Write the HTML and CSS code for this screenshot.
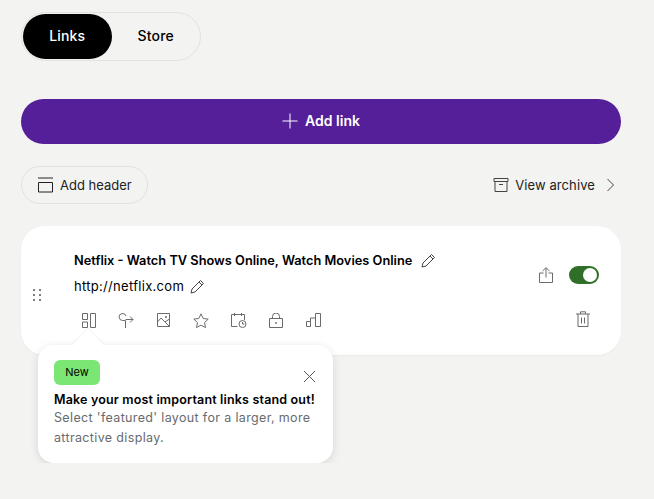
FILE: index.html
```html
<!DOCTYPE html>
<html lang="en">
<head>
  <meta charset="UTF-8" />
  <title>Links</title>
  <link rel="stylesheet" href="styles.css">
</head>
<body>
  <div class="tabs">
    <div class="tab active">Links</div>
    <div class="tab">Store</div>
  </div>

  <button class="add-link">
    <svg width="16" height="16" viewBox="0 0 16 16" fill="none" stroke="#fff"><path d="M8 0.500v15M0.500 8h15"/></svg>
    Add link
  </button>

  <div class="tools">
    <button class="add-header">
      <svg width="16" height="16" viewBox="0 0 16 16" fill="none" stroke="#222"><path d="M1 1h15M1.500 5.500h14v9.500h-14z"/></svg>
      Add header
    </button>
    <div class="archive">
      <svg width="16" height="16" viewBox="0 0 16 16" fill="none" stroke="#444"><path d="M1 1.500h14v3h-14zM2 4.500v10h12v-10M6 7.500h4"/></svg>
      View archive
      <svg class="chevron" width="9" height="14" viewBox="0 0 9 14" fill="none" stroke="#444"><path d="M1.500 1l6 6-6 6"/></svg>
    </div>
  </div>

  <div class="card">
    <div class="handle">
      <svg width="8" height="12" viewBox="0 0 8 12" fill="#555"><circle cx="1" cy="1" r="1"/><circle cx="7" cy="1" r="1"/><circle cx="1" cy="6" r="1"/><circle cx="7" cy="6" r="1"/><circle cx="1" cy="11" r="1"/><circle cx="7" cy="11" r="1"/></svg>
    </div>
    <div class="card-main">
      <div class="title-row">
        Netflix - Watch TV Shows Online, Watch Movies Online
        <svg width="15" height="15" viewBox="0 0 15 15" fill="none" stroke="#444"><path d="M1 14l1-4L10.500 1.500l3 3L5 13zM9 3l3 3"/></svg>
      </div>
      <div class="url-row">
        http://netflix.com
        <svg width="15" height="15" viewBox="0 0 15 15" fill="none" stroke="#444"><path d="M1 14l1-4L10.500 1.500l3 3L5 13zM9 3l3 3"/></svg>
      </div>
      <div class="icon-row">
        <svg width="14" height="15" viewBox="0 0 14 15"><path d="M.5.500h5v6h-5zM.5 9h5v5.500h-5zM8.500.500h5v14h-5z"/></svg>
        <svg width="16" height="16" viewBox="0 0 16 16"><path d="M7.500 16V8.500H4.500a3.500 3.500 0 1 1 3.500-4.500M7.500 7.500h7.500M12 4.500l3 3-3 3"/></svg>
        <svg width="15" height="14" viewBox="0 0 15 14"><path d="M1.500.500h12v13h-12zM1.500 9l3.500-4 8.500 8.500M9 9l4.500-3"/><circle cx="10" cy="4" r=".7"/></svg>
        <svg width="16" height="15" viewBox="0 0 16 15"><path d="M8 .8l2.200 4.700 5 .6-3.700 3.500 1 5L8 12.100l-4.500 2.500 1-5L.8 6.100l5-.6z"/></svg>
        <svg width="16" height="15" viewBox="0 0 16 15"><path d="M6.500 13.500H.5V1.500h13V7M3.500 0v3M10.500 0v3"/><circle cx="11.500" cy="11" r="3.500"/><path d="M11.500 9v2h2"/></svg>
        <svg width="14" height="15" viewBox="0 0 14 15"><path d="M.5 5.500h13v9h-13zM3.500 5.500V3.500a3.500 3.500 0 0 1 7 0v2"/><circle cx="7" cy="10" r=".6"/></svg>
        <svg width="16" height="14" viewBox="0 0 16 14"><path d="M1.500 8.500h4v5h-4zM5.500 13.500V5h5v8.500M10.500 13.500V.500h5v13z"/></svg>
      </div>
    </div>
    <div class="card-side">
      <div class="side-top">
        <svg class="share" width="14" height="16" viewBox="0 0 14 16"><path d="M4.500 6H.5v9.500h13V6h-4M7 10.500V1M3.500 4L7 .7 10.500 4"/></svg>
        <div class="toggle"><span class="knob"></span></div>
      </div>
      <svg class="trash" width="14" height="16" viewBox="0 0 14 16"><path d="M0 3h14M4.500 3V.8h5V3M2 3v12.500h10V3M5.500 6.500v6M8.500 6.500v6"/></svg>
    </div>
  </div>

  <div class="popover">
    <span class="popover-arrow"></span>
    <div class="popover-head">
      <span class="badge">New</span>
      <svg class="close" width="13" height="13" viewBox="0 0 13 13" fill="none" stroke="#555"><path d="M1 1l11 11M12 1L1 12"/></svg>
    </div>
    <div class="popover-title">Make your most important links stand out!</div>
    <div class="popover-text">Select 'featured' layout for a larger, more attractive display.</div>
  </div>
</body>
</html>
```

FILE: styles.css
```css
body {
  margin: 0;
  padding: 12px 33px 0 21px;
  background: #f3f3f1;
  font-family: 'Inter', 'Liberation Sans', sans-serif;
  color: #000;
}

button {
  font-family: inherit;
  cursor: pointer;
}

.tabs {
  display: flex;
  width: 180px;
  height: 49px;
  padding: 1px 0 0 1px;
  border: 1px solid #e2e2dc;
  border-radius: 25px;
  box-sizing: border-box;
}

.tab {
  width: 89px;
  height: 45px;
  border-radius: 23px;
  font-size: 14px;
  font-weight: 500;
  letter-spacing: 0.2px;
  line-height: 44px;
  text-align: center;
}

.tab.active {
  background: #000;
  color: #fff;
}

.add-link {
  display: flex;
  align-items: center;
  justify-content: center;
  gap: 7px;
  width: 600px;
  height: 45px;
  margin-top: 38px;
  padding: 0 0 2px;
  border: none;
  border-radius: 23px;
  background: #551f99;
  color: #fff;
  font-size: 14px;
  font-weight: 600;
}

.tools {
  display: flex;
  align-items: center;
  justify-content: space-between;
  margin-top: 22px;
}

.add-header {
  display: flex;
  align-items: center;
  gap: 7px;
  width: 127px;
  height: 38px;
  padding: 0 0 1px 15px;
  border: 1px solid #e2e2dc;
  border-radius: 19px;
  background: none;
  color: #222;
  font-size: 13px;
}

.archive {
  display: flex;
  align-items: center;
  gap: 6px;
  padding-bottom: 1px;
  color: #222;
  font-size: 13px;
  letter-spacing: 0.1px;
}

.chevron {
  margin-left: 5px;
  margin-right: 6px;
}

.card {
  display: flex;
  height: 129px;
  margin-top: 22px;
  border-radius: 24px;
  background: #fff;
  box-shadow: 0 1px 2px rgba(0, 0, 0, 0.04);
}

.icon-row svg,
.share,
.trash {
  fill: none;
  stroke: #6b6b6b;
}

.handle {
  width: 53px;
  padding: 59px 0 0 12px;
  box-sizing: border-box;
}

.card-main {
  flex: 1;
  padding-top: 24px;
}

.title-row {
  display: flex;
  align-items: center;
  gap: 9px;
  height: 20px;
  font-size: 12.800px;
  font-weight: 600;
}

.url-row {
  display: flex;
  align-items: center;
  gap: 6px;
  height: 20px;
  margin-top: 6px;
  font-size: 13px;
  letter-spacing: 0.3px;
}

.icon-row {
  display: flex;
  align-items: center;
  gap: 22px;
  height: 16px;
  margin-top: 16px;
  margin-left: 8px;
}

.card-side {
  display: flex;
  flex-direction: column;
  align-items: flex-end;
  padding: 40px 22px 0 0;
}

.side-top {
  display: flex;
  align-items: center;
  gap: 16px;
}

.toggle {
  display: flex;
  justify-content: flex-end;
  width: 30px;
  height: 18px;
  padding: 2px;
  box-sizing: border-box;
  border-radius: 9px;
  background: #2f6f27;
}

.knob {
  width: 14px;
  height: 14px;
  border-radius: 50%;
  background: #fff;
}

.trash {
  margin-top: 27px;
  margin-right: 9px;
}

.popover {
  position: relative;
  width: 295px;
  height: 118px;
  margin: -10px 0 0 17px;
  padding: 15px 16px;
  box-sizing: border-box;
  border-radius: 16px;
  background: #fff;
  box-shadow: 0 2px 10px rgba(0, 0, 0, 0.12);
}

.popover-arrow {
  position: absolute;
  left: 39px;
  top: -11px;
  width: 22px;
  height: 22px;
  background: #fff;
  box-shadow: -1px -1px 2px rgba(0, 0, 0, 0.05);
  transform: rotate(45deg);
}

.popover-head {
  position: relative;
  display: flex;
  justify-content: space-between;
  height: 25px;
}

.badge {
  width: 46px;
  height: 25px;
  border-radius: 6px;
  background: #7be673;
  font-size: 11px;
  line-height: 24px;
  text-align: center;
}

.close {
  margin-top: 10px;
  margin-right: 1px;
}

.popover-title {
  margin-top: 6px;
  font-size: 12.500px;
  font-weight: 600;
  letter-spacing: 0.17px;
  line-height: 17px;
  white-space: nowrap;
}

.popover-text {
  font-size: 12.500px;
  letter-spacing: 0.35px;
  line-height: 20px;
  color: #676b6e;
}
```
